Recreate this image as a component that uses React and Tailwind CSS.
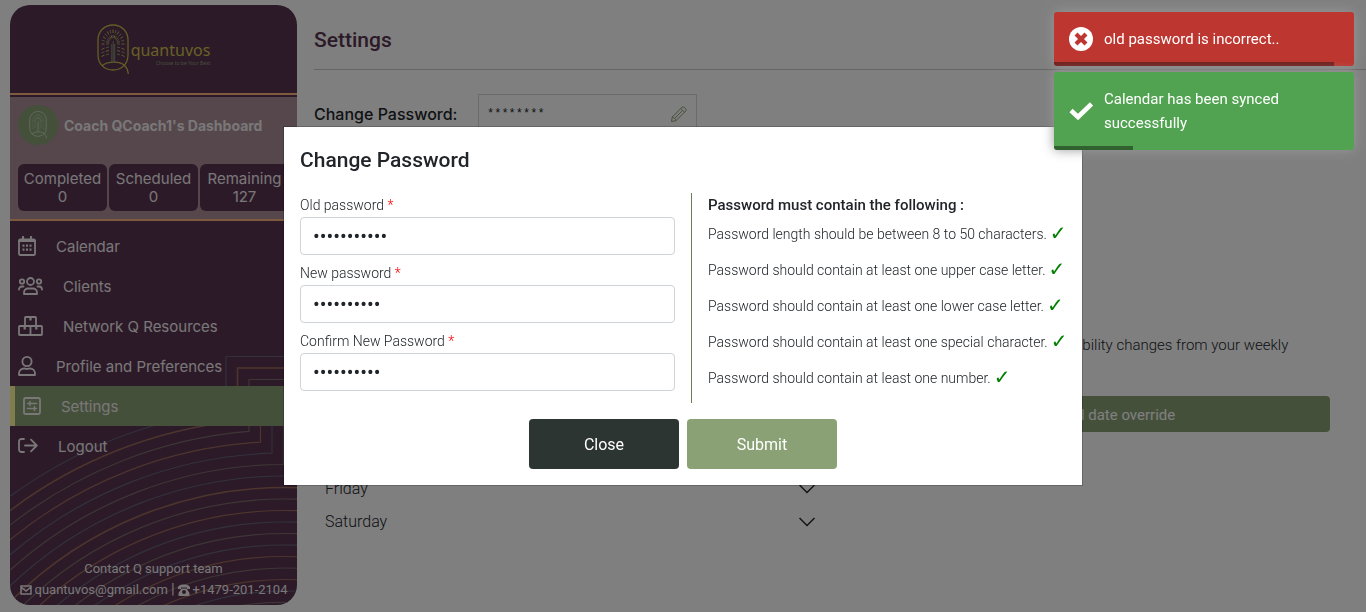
import React from 'react';

const BLUE = '#67637c';
const RUST = '#9a6b5a';
const GRAY = '#7b6d6b';
const LINE_COLORS = [
  BLUE, RUST, GRAY, RUST, BLUE, GRAY, BLUE, RUST, GRAY,
  RUST, BLUE, GRAY, BLUE, RUST, GRAY, RUST, BLUE, GRAY,
];

function SidebarPattern() {
  return (
    <svg viewBox="0 0 287 600" preserveAspectRatio="xMinYMax slice" fill="none" aria-hidden="true" className="absolute inset-0 h-full w-full">
      {LINE_COLORS.map((color, k) => {
        const r = 468 - 11.5 * k;
        const x = Math.min(216 + 11.5 * k, 288);
        const y = 870 - Math.sqrt(r * r - (275 - x) ** 2);
        const startY = 870 - Math.sqrt(Math.max(r * r - 275 * 275, 0));
        const top = 351.5 + 11.5 * k;
        const d = `M0 ${startY} A${r} ${r} 0 0 1 ${x} ${y}` + (x < 288 ? ` V${top} H288` : '');
        return <path key={k} d={d} stroke={color} strokeWidth={k === 1 || k === 7 ? 1.5 : 1.2} />;
      })}
    </svg>
  );
}

function TreeMark({ className, ray, trunk, ring }) {
  const rays = [];
  for (let i = 0; i < 13; i++) {
    const a = ((-180 + i * 15) * Math.PI) / 180;
    const c = Math.cos(a);
    const s = Math.sin(a);
    rays.push([16 + c * 4, 20 + s * 6, 16 + c * 7, 20 + s * 9, i]);
    rays.push([16 + c * 8.5, 20 + s * 11, 16 + c * 11.5, 20 + s * 14.5, i + 1]);
  }
  [23.5, 27, 30.5].forEach((y, i) => {
    [-1, 1].forEach((side) => {
      rays.push([16 + side * 4, y - 0.5, 16 + side * 7, y + 0.3, i]);
      rays.push([16 + side * 8.5, y + 0.6, 16 + side * 11.5, y + 2, i + 1]);
    });
  });
  return (
    <svg viewBox="0 0 32 51" fill="none" aria-hidden="true" className={className}>
      <path d="M16 1C7.500 1 1 7.500 1 16v15c0 9 6.500 15 15 15s15-6 15-15V16C31 7.500 24.500 1 16 1Z" stroke={ring} strokeWidth="1.300" />
      <path d="M5 42c4-4.500 17-5.500 22-1 3 2.500 4 5.500 4.300 9" stroke={ring} strokeWidth="1.300" />
      <path d="M14.800 38V20M16.200 38V17M17.700 38V20" stroke={trunk} strokeWidth="0.900" />
      {rays.map(([x1, y1, x2, y2, n], i) => (
        <path key={i} d={`M${x1} ${y1}L${x2} ${y2}`} stroke={n % 2 ? ray : trunk} strokeWidth="1" />
      ))}
    </svg>
  );
}

const stroke = { fill: 'none', stroke: 'currentColor', strokeWidth: 1.8, strokeLinejoin: 'round', strokeLinecap: 'round', 'aria-hidden': true };

const CalendarIcon = () => (
  <svg {...stroke} viewBox="0 0 18 20" className="h-5 w-[18px]">
    <rect x="1" y="3.500" width="16" height="15.500" rx="1.200" />
    <path d="M1 5h16M5 1v3M13 1v3" strokeWidth="2.200" />
    <path d="M4.500 9.700h2M8 9.700h2M11.500 9.700h2M4.500 13.700h2M8 13.700h2M11.500 13.700h2" strokeWidth="2.200" strokeLinecap="butt" />
  </svg>
);
const ClientsIcon = () => (
  <svg {...stroke} viewBox="0 0 25 20" className="h-5 w-[25px]">
    <circle cx="12.500" cy="5.500" r="3.500" />
    <circle cx="4" cy="5.500" r="2.200" />
    <circle cx="21" cy="5.500" r="2.200" />
    <path d="M6 18v-1.500a4 4 0 0 1 4-4h5a4 4 0 0 1 4 4V18ZM1 13.500a3 3 0 0 1 3-3h1.500M24 13.500a3 3 0 0 0-3-3h-1.500" />
  </svg>
);
const BoxesIcon = () => (
  <svg {...stroke} viewBox="0 0 25 20" className="h-5 w-[25px]">
    <path d="M7 10V1.800a.8.8 0 0 1 .8-.8h9.400a.8.8 0 0 1 .8.800V10M1.800 10h21.400a.8.8 0 0 1 .8.800v7.400a.8.8 0 0 1-.8.800H1.800a.8.8 0 0 1-.8-.8v-7.400a.8.8 0 0 1 .8-.8ZM12.500 10v9" />
    <path d="M12.500 1v3.500M6.700 10v3.500M18.300 10v3.500" strokeWidth="2.200" strokeLinecap="butt" />
  </svg>
);
const UserIcon = () => (
  <svg {...stroke} viewBox="0 0 18 20" className="h-5 w-[18px]">
    <circle cx="9" cy="5.500" r="4.600" />
    <path d="M1 19v-1.500a5 5 0 0 1 5-5c1 0 1.500.5 3 .5s2-.5 3-.5a5 5 0 0 1 5 5V19Z" />
  </svg>
);
const SettingsIcon = () => (
  <svg {...stroke} viewBox="0 0 18 20" className="h-5 w-[18px]">
    <rect x="1" y="2" width="16" height="16" rx="1.500" />
    <path d="M4.500 7.500h9M7 5.500v4M4.500 12.500h9M11.500 10.500v4" strokeWidth="1.500" />
  </svg>
);
const LogoutIcon = () => (
  <svg {...stroke} viewBox="0 0 20 20" className="h-5 w-5">
    <path d="M6 3H3.500A2.500 2.500 0 0 0 1 5.500v8A2.500 2.500 0 0 0 3.500 16H6M7 9.500h11.500M13 3.700l5.800 5.800-5.800 5.800" />
  </svg>
);

const NAV = [
  { label: 'Calendar', Icon: CalendarIcon },
  { label: 'Clients', Icon: ClientsIcon },
  { label: 'Network Q Resources', Icon: BoxesIcon },
  { label: 'Profile and Preferences', Icon: UserIcon },
  { label: 'Settings', Icon: SettingsIcon, active: true },
  { label: 'Logout', Icon: LogoutIcon },
];

const STATS = [
  ['Completed', '0'],
  ['Scheduled', '0'],
  ['Remaining', '127'],
];

function Sidebar() {
  return (
    <aside className="relative my-[5px] ml-2.5 flex w-[287px] shrink-0 flex-col overflow-hidden rounded-[20px] bg-[#583450] font-['Inter',sans-serif] text-[15px] text-[#f3eef1]">
      <SidebarPattern />
      <div className="relative flex h-[90px] items-center justify-center gap-0.5 border-b-2 border-[#fcb680]">
        <TreeMark className="h-[51px] w-8" ray="#c4b94e" trunk="#8aa176" ring="#c9bb4c" />
        <div className="flex flex-col items-end pt-2 font-['Noto_Sans',sans-serif]">
          <span className="text-[16px] leading-5 text-[#d0c24c]">quantuvos</span>
          <span className="text-[5px] leading-[6px] text-[#8aa176]">Choose to be Your Best</span>
        </div>
      </div>
      <section className="relative mt-[2px] h-[124px] shrink-0 border-b-2 border-[#fcb680] bg-[#aa8e96] pt-2 pl-2">
        <div className="flex h-10 items-center gap-1.5">
          <span className="flex h-10 w-10 items-center justify-center rounded-full bg-[#8aa176]">
            <TreeMark className="h-7 w-[18px]" ray="#c2cfb6" trunk="#c2cfb6" ring="#dbe4d3" />
          </span>
          <h2 className="whitespace-nowrap text-[14px] font-bold">Coach QCoach1's Dashboard</h2>
        </div>
        <dl className="mt-[19px] flex w-max gap-[2px]">
          {STATS.map(([label, value]) => (
            <div key={label} className="flex h-[47px] w-[89px] flex-col items-center justify-center rounded-md bg-[#583450] leading-[18px]">
              <dt>{label}</dt>
              <dd>{value}</dd>
            </div>
          ))}
        </dl>
      </section>
      <nav className="relative mt-[5px]">
        {NAV.map(({ label, Icon, active }) => (
          <a
            key={label}
            href="#"
            className={
              active
                ? 'flex h-10 items-center gap-5 border-l-[5px] border-[#fffb9a] bg-[#8aa176] pl-2'
                : 'flex h-10 items-center gap-5 pl-2'
            }
          >
            <Icon />
            <span className="whitespace-nowrap pt-0.5">{label}</span>
          </a>
        ))}
      </nav>
      <footer className="relative mt-auto pb-[5px] text-center font-['Roboto',sans-serif] text-[13px] leading-[21px]">
        <p>Contact Q support team</p>
        <p className="flex items-center justify-center gap-[3px] whitespace-nowrap">
          <svg viewBox="0 0 12 10" className="h-2.5 w-3" fill="none" stroke="currentColor" strokeWidth="1.500" aria-hidden="true">
            <path d="M1 1h10v8H1ZM1 2l5 4 5-4" />
          </svg>
          <a href="mailto:quantuvos@gmail.com">quantuvos@gmail.com</a>
          <span className="text-[15px]">|</span>
          <svg viewBox="0 0 12 12" className="h-3 w-3" fill="currentColor" aria-hidden="true">
            <path d="M0 4V3c1-2 3.500-2.500 6-2.500S11 1 12 3v2H9V3.500H3V5H0Z" />
            <path fillRule="evenodd" d="M3.500 4.500h5L11.500 9v3H.5V9ZM6 6a2 2 0 1 0 0 4 2 2 0 0 0 0-4Z" />
          </svg>
          <a href="tel:+14792012104">+1479-201-2104</a>
        </p>
      </footer>
    </aside>
  );
}

const DAYS = ['Sunday', 'Monday', 'Tuesday', 'Wednesday', 'Thursday', 'Friday', 'Saturday'];

function SettingsPage() {
  return (
    <main className="min-w-0 flex-1 pl-[17px] text-[#212529]">
      <h1 className="flex h-[69px] items-center pt-3 text-[21px] font-medium text-[#583450]">Settings</h1>
      <hr className="border-[#c8c8c8]" />
      <div className="mt-6 flex items-center gap-4">
        <label htmlFor="current" className="w-[148px] whitespace-nowrap font-['Inter',sans-serif] text-base font-medium">Change Password:</label>
        <div className="flex h-10 w-[219px] items-center justify-between border border-[#d6d6d6] px-2">
          <input id="current" readOnly defaultValue="********" className="w-[150px] bg-transparent font-['Liberation_Mono',monospace] text-[12px] outline-none" />
          <button aria-label="Edit password" className="text-[#8aa176]">
            <svg viewBox="0 0 18 18" className="h-[18px] w-[18px]" fill="none" stroke="currentColor" strokeWidth="1" strokeLinejoin="round" aria-hidden="true">
              <path d="M1.500 16.500l.8-4.500L12 2.300c1.500-1.500 5.200 2 3.700 3.700L6 15.700ZM10.800 3.500l3.700 3.700M2.300 12c1.700.3 3.200 2 3.700 3.700M4.500 13.500l8-8" />
            </svg>
          </button>
        </div>
      </div>
      <div className="mt-[173px] flex pl-[11px]">
        <ul className="w-[490px]">
          {DAYS.map((day) => (
            <li key={day} className="flex h-[33px] items-center justify-between text-base font-light">
              {day}
              <svg viewBox="0 0 16 10" className="h-2.5 w-4" fill="none" stroke="currentColor" strokeWidth="1.500" aria-hidden="true">
                <path d="M.5 1 8 8.500 15.500 1" />
              </svg>
            </li>
          ))}
        </ul>
        <div className="ml-[88px] mr-9 flex flex-1 flex-col pt-[26px]">
          <p className="max-w-[410px] text-[15px] leading-6 font-light">Add dates when your availability changes from your weekly hours.</p>
          <button className="mt-[15px] h-9 rounded bg-[#8aa176] pt-0.5 text-[15px] text-white">Add date override</button>
        </div>
      </div>
    </main>
  );
}

const FIELDS = [
  ['old', 'Old password', 'abcdefghijk'],
  ['new', 'New password', 'abcdefghij'],
  ['confirm', 'Confirm New Password', 'abcdefghij'],
];

const RULES = [
  'Password length should be between 8 to 50 characters.',
  'Password should contain at least one upper case letter.',
  'Password should contain at least one lower case letter.',
  'Password should contain at least one special character.',
  'Password should contain at least one number.',
];

function PasswordDialog() {
  return (
    <div className="fixed inset-0 flex items-center justify-center bg-black/50">
      <form role="dialog" aria-labelledby="dialog-title" className="w-full max-w-[798px] bg-white p-4 text-[#212529] ring-1 ring-black/20">
        <h2 id="dialog-title" className="mb-4 text-[21px] leading-[34px] font-medium">Change Password</h2>
        <div className="grid grid-cols-2 gap-4">
          <div className="flex flex-col gap-1.5 pb-3">
            {FIELDS.map(([id, label, value]) => (
              <div key={id}>
                <label htmlFor={id} className="block text-[14px] leading-6 font-light">
                  {label} <span className="text-[#ff0000]">*</span>
                </label>
                <input
                  id={id}
                  type="password"
                  defaultValue={value}
                  className="block h-[38px] w-full rounded border border-[#ced4da] px-3 text-[20px] outline-none"
                />
              </div>
            ))}
          </div>
          <div className="border-l border-[#6b8058] pl-4">
            <h3 className="text-[15px] leading-6 font-medium">Password must contain the following :</h3>
            <ul className="text-[14px] font-light">
              {RULES.map((rule) => (
                <li key={rule} className="flex h-9 items-start gap-[3px] whitespace-nowrap pt-[5px] leading-6">
                  {rule}
                  <span className="font-['DejaVu_Sans',sans-serif] text-[20px] leading-[22px] font-bold text-[#008000]">✓</span>
                </li>
              ))}
            </ul>
          </div>
        </div>
        <div className="mt-4 flex justify-center gap-2">
          <button type="button" className="h-[50px] w-[150px] rounded bg-[#2d3532] pt-0.5 text-base text-white">Close</button>
          <button type="submit" className="h-[50px] w-[150px] rounded bg-[#8aa176] pt-0.5 text-base text-white">Submit</button>
        </div>
      </form>
    </div>
  );
}

function Toasts() {
  return (
    <div className="fixed top-3 right-3 flex w-[300px] flex-col gap-1.5 text-[15px] leading-6 text-white">
      <div role="alert" className="relative flex items-center gap-[11px] overflow-hidden rounded-[3px] bg-[#bd362f] p-[15px] shadow-[0_0_12px_#999]">
        <svg viewBox="0 0 24 24" className="h-6 w-6 shrink-0" aria-hidden="true">
          <circle cx="12" cy="12" r="12" fill="white" />
          <path d="M8.500 8.500l7 7M15.500 8.500l-7 7" stroke="#bd362f" strokeWidth="4.200" strokeLinecap="square" />
        </svg>
        <p>old password is incorrect..</p>
        <div className="absolute bottom-0 left-0 h-1 w-[280px] bg-black/40" />
      </div>
      <div role="status" className="relative flex items-center gap-[11px] overflow-hidden rounded-[3px] bg-[#51a351] p-[15px] shadow-[0_0_12px_#999]">
        <svg viewBox="0 0 24 24" className="h-6 w-6 shrink-0" fill="none" aria-hidden="true">
          <path d="M2 11.500l7 6.500L22.500 5" stroke="white" strokeWidth="4.600" />
        </svg>
        <p className="max-w-[200px]">Calendar has been synced successfully</p>
        <div className="absolute bottom-0 left-0 h-1 w-[79px] bg-black/40" />
      </div>
    </div>
  );
}

export default function App() {
  return (
    <div className="flex min-h-screen bg-white pb-0.5 font-['Roboto',sans-serif]">
      <Sidebar />
      <SettingsPage />
      <PasswordDialog />
      <Toasts />
    </div>
  );
}
